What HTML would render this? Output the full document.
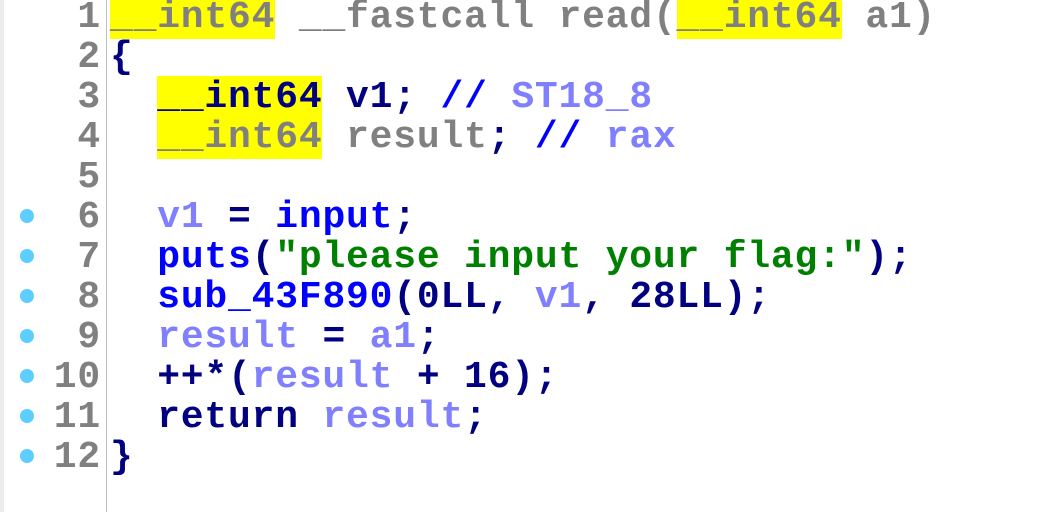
<!DOCTYPE html>
<html><head><style>
body{margin:0;width:1062px;height:512px;background:#fff;overflow:hidden;position:relative;font-family:"Liberation Mono",monospace;font-weight:bold;font-size:38px;letter-spacing:0.8px}
.strip{position:absolute;left:0;top:0;width:4px;height:512px;background:#ececec}
.vline{position:absolute;left:106px;top:0;width:1px;height:512px;background:#c0c0c0}
.ln{position:absolute;left:0;width:101px;text-align:right;height:40px;line-height:40px;color:#808080;white-space:pre}
.code{position:absolute;left:110px;height:40px;line-height:40px;white-space:pre;color:#000080}
.dot{position:absolute;left:20px;width:14px;height:14px;border-radius:50%;background:#5ccfff}
.g{color:#808080}.n{color:#000080}.b{color:#0000ff}.v{color:#8080ff}.s{color:#008000}
.h{background:#ffff00}
</style></head><body>
<div class="strip"></div>
<div class="vline"></div>
<div class="ln" style="top:-2px">1</div>
<div class="ln" style="top:38px">2</div>
<div class="ln" style="top:78px">3</div>
<div class="ln" style="top:118px">4</div>
<div class="ln" style="top:158px">5</div>
<div class="ln" style="top:198px">6</div>
<div class="ln" style="top:238px">7</div>
<div class="ln" style="top:278px">8</div>
<div class="ln" style="top:318px">9</div>
<div class="ln" style="top:358px">10</div>
<div class="ln" style="top:398px">11</div>
<div class="ln" style="top:438px">12</div>
<div class="dot" style="top:209px"></div>
<div class="dot" style="top:249px"></div>
<div class="dot" style="top:289px"></div>
<div class="dot" style="top:329px"></div>
<div class="dot" style="top:369px"></div>
<div class="dot" style="top:409px"></div>
<div class="dot" style="top:449px"></div>
<div class="code g" style="top:-2px"><span class="h">__int64</span> __fastcall read(<span class="h">__int64</span> a1)</div>
<div class="code" style="top:38px">{</div>
<div class="code" style="top:78px">  <span class="h n">__int64</span> v1; <span class="b">//</span> <span class="v">ST18_8</span></div>
<div class="code" style="top:118px">  <span class="h g">__int64</span> <span class="g">result</span>; <span class="b">//</span> <span class="v">rax</span></div>
<div class="code" style="top:198px">  <span class="v">v1</span> = <span class="b">input</span>;</div>
<div class="code" style="top:238px">  <span class="b">puts</span>(<span class="s">"please input your flag:"</span>);</div>
<div class="code" style="top:278px">  <span class="b">sub_43F890</span>(0LL, <span class="v">v1</span>, 28LL);</div>
<div class="code" style="top:318px">  <span class="v">result</span> = <span class="v">a1</span>;</div>
<div class="code" style="top:358px">  ++*(<span class="v">result</span> + 16);</div>
<div class="code" style="top:398px">  return <span class="v">result</span>;</div>
<div class="code" style="top:438px">}</div>
</body></html>
